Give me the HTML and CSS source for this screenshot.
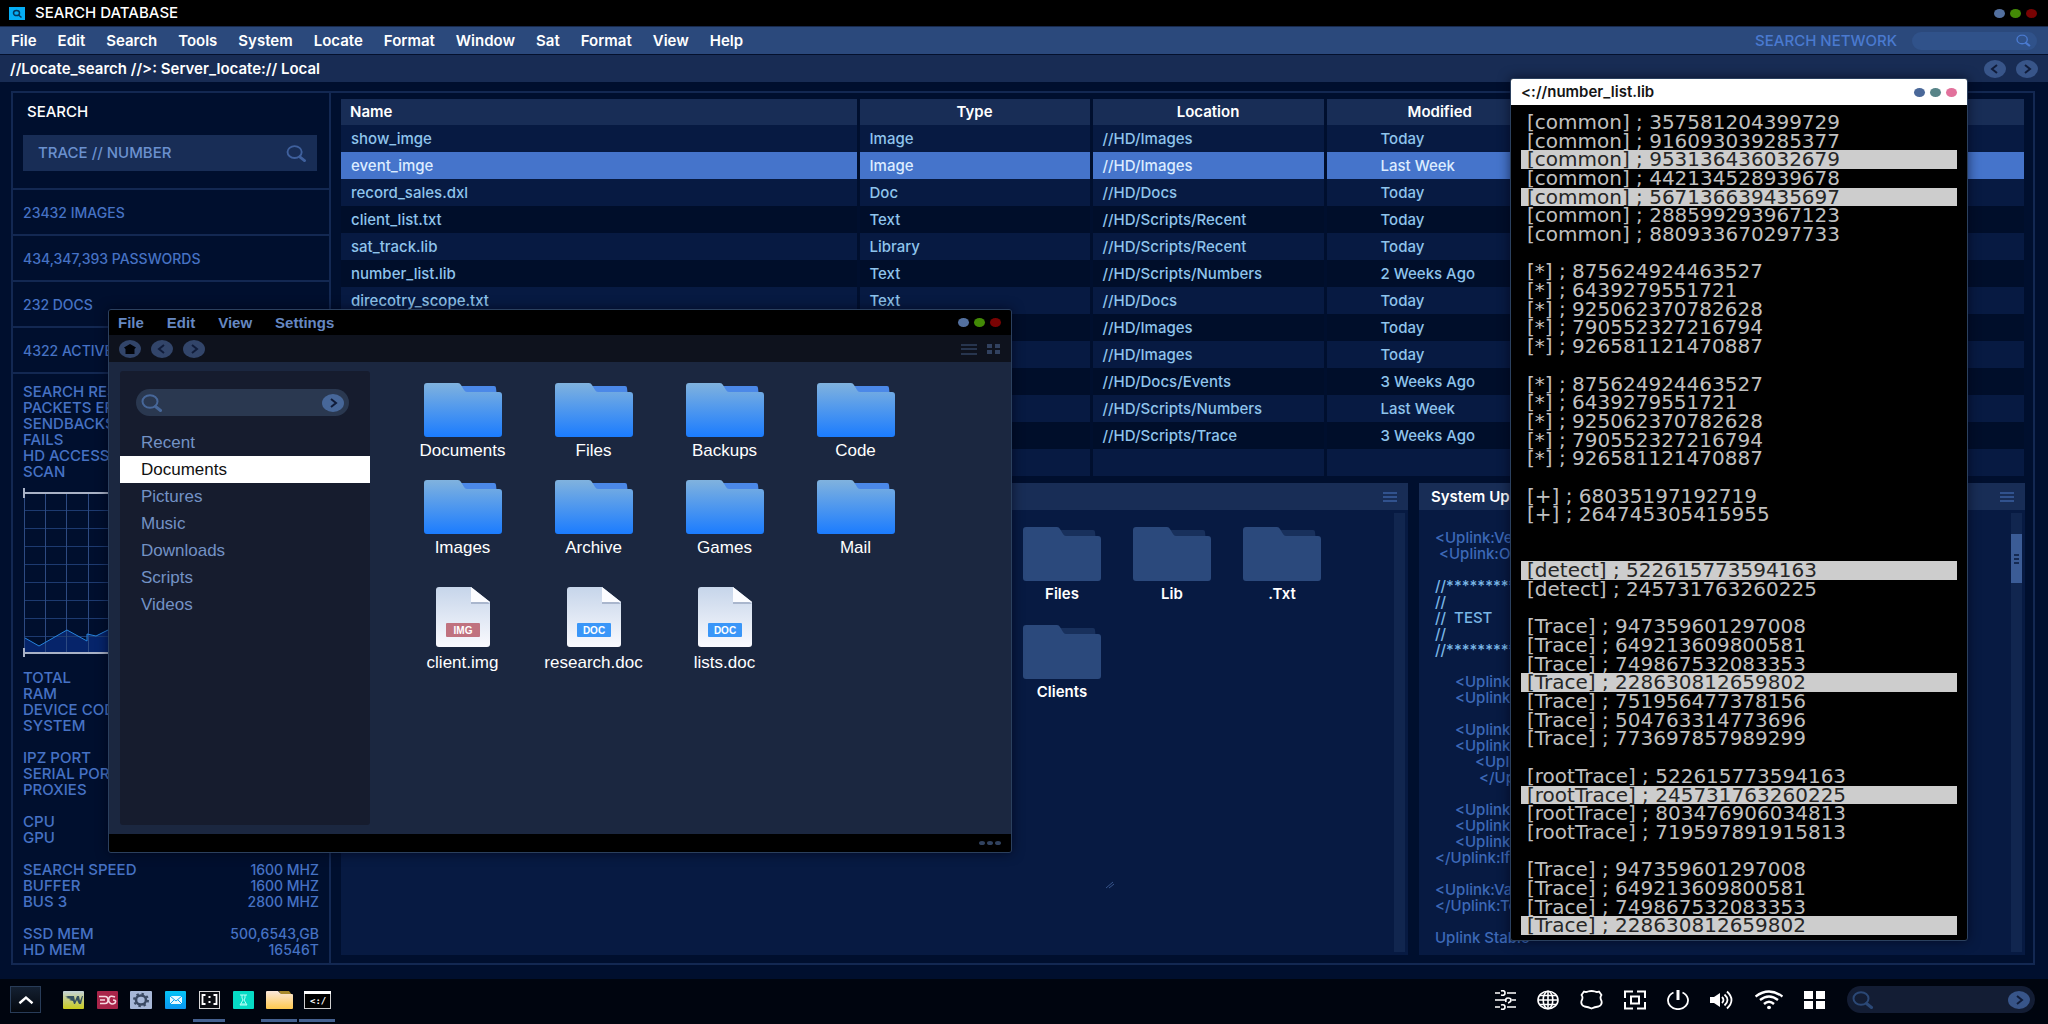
FILE: index.html
```html
<!DOCTYPE html>
<html lang="en">
<head>
<meta charset="utf-8">
<meta name="viewport" content="width=device-width, initial-scale=1">
<title>Search Database</title>
<link rel="stylesheet" href="styles.css">
</head>
<body>
<svg class="defs" aria-hidden="true">
  <defs>
    <linearGradient id="g-folder" x1="0" y1="0" x2="0" y2="1"><stop offset="0" stop-color="#80b2de"/><stop offset="1" stop-color="#1b7cff"/></linearGradient>
    <linearGradient id="g-file" x1="0" y1="0" x2="0" y2="1"><stop offset="0" stop-color="#c6d5ea"/><stop offset="1" stop-color="#fafafe"/></linearGradient>
    <linearGradient id="g-yellow" x1="0" y1="0" x2="0" y2="1"><stop offset="0" stop-color="#c4d3da"/><stop offset="1" stop-color="#c9cb1c"/></linearGradient>
    <linearGradient id="g-sand" x1="0" y1="0" x2="0" y2="1"><stop offset="0" stop-color="#fbe8dc"/><stop offset="1" stop-color="#ffc94d"/></linearGradient>
    <linearGradient id="g-mail" x1="0" y1="0" x2="0" y2="1"><stop offset="0" stop-color="#05c4f5"/><stop offset="1" stop-color="#0a96f0"/></linearGradient>
    <symbol id="folder" viewBox="0 0 78 54">
      <path class="tab" d="M36 3h34q2 0 2 2l1 9H36z"/>
      <path class="front" d="M3 0h31q2 0 3 2l3 5q1 2 3 2h32q3 0 3 3v39q0 3-3 3H3q-3 0-3-3V3q0-3 3-3z"/>
    </symbol>
    <symbol id="file" viewBox="0 0 54 60">
      <path fill="url(#g-file)" d="M3 0h32l19 15v42q0 3-3 3H3q-3 0-3-3V3q0-3 3-3z"/>
      <path fill="#a9b6cd" d="M35 2v15h19z"/>
      <path fill="#fbfcff" d="M35 0v15h19z"/>
    </symbol>
    <symbol id="lens" viewBox="0 0 22 18"><ellipse cx="9" cy="7.500" rx="7.500" ry="6.300" fill="none" stroke="currentColor" stroke-width="2"/><path d="M14.500 12.500l5 4" stroke="currentColor" stroke-width="3" stroke-linecap="round"/></symbol>
    <symbol id="next" viewBox="0 0 22 18"><path d="M9 5l5 4-5 4" fill="none" stroke="currentColor" stroke-width="2"/></symbol>
    <symbol id="prev" viewBox="0 0 22 18"><path d="M13 5L8 9l5 4" fill="none" stroke="currentColor" stroke-width="2"/></symbol>
    <symbol id="lines" viewBox="0 0 14 10"><path d="M0 1h14M0 5h14M0 9h14" stroke="currentColor" stroke-width="2"/></symbol>
  </defs>
</svg>

<header>
  <div class="titlebar">
    <svg class="app-icon" viewBox="0 0 16 13" aria-hidden="true"><rect width="16" height="13" fill="#05aef5"/><ellipse cx="7.500" cy="6" rx="3" ry="2.600" fill="none" stroke="#03365c" stroke-width="1.500"/><path d="M9.500 8l3 2.500" stroke="#03365c" stroke-width="1.500"/></svg>
    <h1>SEARCH DATABASE</h1>
    <div class="dots"><button class="dot blue" aria-label="Minimize"></button><button class="dot green" aria-label="Maximize"></button><button class="dot red" aria-label="Close"></button></div>
  </div>
  <div class="menubar">
    <nav class="menu" aria-label="Main menu">
      <button>File</button><button>Edit</button><button>Search</button><button>Tools</button><button>System</button><button>Locate</button><button>Format</button><button>Window</button><button>Sat</button><button>Format</button><button>View</button><button>Help</button>
    </nav>
    <label class="network-label" for="network">SEARCH NETWORK</label>
    <div class="network"><input id="network" type="text"><svg viewBox="0 0 22 18" aria-hidden="true"><use href="#lens"/></svg></div>
  </div>
  <div class="address">
    <span class="path">//Locate_search //&gt;: Server_locate:// Local</span>
    <button class="round" aria-label="Back"><svg><use href="#prev"/></svg></button>
    <button class="round" aria-label="Forward"><svg><use href="#next"/></svg></button>
  </div>
</header>

<main class="frame">
  <aside class="side">
    <div class="side-search">
      <label for="trace">SEARCH</label>
      <div class="field"><input id="trace" type="text" value="TRACE // NUMBER"><svg viewBox="0 0 22 18" aria-hidden="true"><use href="#lens"/></svg></div>
    </div>
    <p class="count">23432 IMAGES</p>
    <p class="count">434,347,393 PASSWORDS</p>
    <p class="count">232 DOCS</p>
    <p class="count">4322 ACTIVE</p>
    <dl class="stats stats-top">
      <dt>SEARCH RESULTS</dt><dt>PACKETS ERR</dt><dt>SENDBACKS</dt><dt>FAILS</dt><dt>HD ACCESS</dt><dt>SCAN</dt>
    </dl>
    <svg class="graph" viewBox="0 0 296 169" aria-hidden="true">
      <path fill="#06246a" d="M2 150l14 8 28-16 20 11v-7l9 2 12-6 30 8 40-10 50 6 90-4v23H2z"/>
      <path stroke="#1d3a70" stroke-width="1" d="M1 22.500h294M1 40.500h294M1 58.500h294M1 76.500h294M1 94.500h294M1 112.500h294M1 130.500h294M1 148.500h294"/>
      <path stroke="#2d4a82" stroke-width="1" d="M1.500 5v160M22.500 5v160M43.500 5v160M65.500 5v160M86.500 5v160M107.500 5v160M129.500 5v160"/>
      <path fill="none" stroke="#2784dd" stroke-width="1" d="M2 150l14 8 28-16 20 11v-7l9 2 12-6 30 8 40-10 50 6 90-4"/>
      <path stroke="#a9b2c6" stroke-width="2" d="M1 5h294M1 165h294M1 0v10M1 160v9"/>
    </svg>
    <dl class="stats">
      <dt>TOTAL</dt><dt>RAM</dt><dt>DEVICE CODE</dt><dt>SYSTEM</dt>
      <dt class="gap">IPZ PORT</dt><dt>SERIAL PORTS</dt><dt>PROXIES</dt>
      <dt class="gap">CPU</dt><dt>GPU</dt>
      <dt class="gap">SEARCH SPEED</dt><dd>1600 MHZ</dd><dt>BUFFER</dt><dd>1600 MHZ</dd><dt>BUS 3</dt><dd>2800 MHZ</dd>
      <dt class="gap">SSD MEM</dt><dd>500,6543,GB</dd><dt>HD MEM</dt><dd>16546T</dd>
    </dl>
  </aside>

  <div class="content">
    <table class="files">
      <colgroup><col class="c-name"><col class="c-type"><col class="c-loc"><col class="c-mod"><col></colgroup>
      <thead><tr><th>Name</th><th>Type</th><th>Location</th><th>Modified</th><th></th></tr></thead>
      <tbody>
        <tr><td>show_imge</td><td>Image</td><td>//HD/Images</td><td>Today</td><td></td></tr>
        <tr class="selected"><td>event_imge</td><td>Image</td><td>//HD/Images</td><td>Last Week</td><td></td></tr>
        <tr><td>record_sales.dxl</td><td>Doc</td><td>//HD/Docs</td><td>Today</td><td></td></tr>
        <tr><td>client_list.txt</td><td>Text</td><td>//HD/Scripts/Recent</td><td>Today</td><td></td></tr>
        <tr><td>sat_track.lib</td><td>Library</td><td>//HD/Scripts/Recent</td><td>Today</td><td></td></tr>
        <tr><td>number_list.lib</td><td>Text</td><td>//HD/Scripts/Numbers</td><td>2 Weeks Ago</td><td></td></tr>
        <tr><td>direcotry_scope.txt</td><td>Text</td><td>//HD/Docs</td><td>Today</td><td></td></tr>
        <tr><td></td><td></td><td>//HD/Images</td><td>Today</td><td></td></tr>
        <tr><td></td><td></td><td>//HD/Images</td><td>Today</td><td></td></tr>
        <tr><td></td><td></td><td>//HD/Docs/Events</td><td>3 Weeks Ago</td><td></td></tr>
        <tr><td></td><td></td><td>//HD/Scripts/Numbers</td><td>Last Week</td><td></td></tr>
        <tr><td></td><td></td><td>//HD/Scripts/Trace</td><td>3 Weeks Ago</td><td></td></tr>
        <tr><td></td><td></td><td></td><td></td><td></td></tr>
      </tbody>
    </table>
    <div class="panels">
      <section class="panel">
        <div class="panel-head"><button class="lines" aria-label="Panel menu"><svg><use href="#lines"/></svg></button></div>
        <div class="panel-body">
          <div class="archive">
            <a href="#"><svg><use href="#folder"/></svg>Files</a>
            <a href="#"><svg><use href="#folder"/></svg>Lib</a>
            <a href="#"><svg><use href="#folder"/></svg>.Txt</a>
            <a href="#"><svg><use href="#folder"/></svg>Clients</a>
          </div>
          <svg class="grip" viewBox="0 0 10 8" aria-hidden="true"><path d="M1 7l7-6M4 7l5-4" stroke="#37558c" stroke-width="1"/></svg>
          <div class="scroll"></div>
        </div>
      </section>
      <section class="panel">
        <div class="panel-head"><h2>System Uplink</h2><button class="lines" aria-label="Panel menu"><svg><use href="#lines"/></svg></button></div>
        <div class="panel-body">
<pre class="code">&lt;Uplink:Version
 &lt;Uplink:Open

<span class="note">//*******************
//
//  TEST
//
//*******************</span>

     &lt;Uplink
     &lt;Uplink

     &lt;Uplink
     &lt;Uplink
          &lt;Uplink
           &lt;/Uplink

     &lt;Uplink
     &lt;Uplink
     &lt;Uplink
&lt;/Uplink:If

&lt;Uplink:Val
&lt;/Uplink:Test

Uplink Stable</pre>
          <div class="scroll"><div class="thumb"><i></i><i></i><i></i></div></div>
        </div>
      </section>
    </div>
  </div>
</main>

<footer class="taskbar">
  <button class="start" aria-label="Start"><svg viewBox="0 0 31 26"><path d="M9 17l7-6 7 6" fill="none" stroke="#fff" stroke-width="2.500"/></svg></button>
  <div class="apps">
    <button aria-label="Wings"><svg width="21" height="18" viewBox="0 0 21 18"><rect width="21" height="18" rx="1" fill="url(#g-yellow)"/><path d="M2 5h9l1 5 2-5h2l1 5 2-5h1l-2 8h-2l-2-4-2 4h-1l-1-3-4-1 2-1-5-1 2-1z" fill="#35505f"/></svg></button>
    <button aria-label="Links"><svg width="21" height="18" viewBox="0 0 21 18"><rect width="21" height="18" rx="1" fill="#a82449"/><path d="M2 5.500h6q3 0 3 3.500t-3 3.500H3M3 9h5M18 6q-5-2-6 1t1 5 5 0q2-3-2-3" fill="none" stroke="#f5d8e0" stroke-width="1.600"/></svg></button>
    <button aria-label="Settings"><svg width="22" height="18" viewBox="0 0 22 18"><rect width="22" height="18" rx="1" fill="#a7b8d8"/><ellipse cx="11" cy="9" rx="5" ry="4.500" fill="none" stroke="#3b4a63" stroke-width="2.600"/><ellipse cx="11" cy="9" rx="7" ry="6.200" fill="none" stroke="#3b4a63" stroke-width="2" stroke-dasharray="2.400 2.800"/></svg></button>
    <button aria-label="Mail"><svg width="21" height="18" viewBox="0 0 21 18"><rect width="21" height="18" rx="1" fill="url(#g-mail)"/><rect x="5" y="5" width="12" height="8" fill="#e8faff"/><path d="M5 5l6 5 6-5M5 13l4-4M17 13l-4-4" fill="none" stroke="#0a9fee" stroke-width="1"/></svg></button>
    <button class="open" aria-label="Brackets"><svg width="21" height="18" viewBox="0 0 21 18"><rect x=".5" y=".5" width="20" height="17" fill="#0b0d12" stroke="#d8d8d8"/><path d="M6.500 4h-3v9h3M14.500 4h3v9h-3" fill="none" stroke="#fff" stroke-width="1.800"/><path d="M9.500 5h2v2h-2zM9.500 10h2v2h-2z" fill="#fff"/></svg></button>
    <button aria-label="Lab"><svg width="21" height="18" viewBox="0 0 21 18"><rect width="21" height="18" rx="1" fill="#06dcc6"/><path d="M7 4h7M9 4v3l1 2-3 5h7l-3-5 1-2V4M8 13h5" fill="none" stroke="#b8fff6" stroke-width="1"/></svg></button>
    <button class="open wide" aria-label="Files"><svg width="27" height="18" viewBox="0 0 27 18"><path d="M13 0h10l3 4H15z" fill="#a98a2c"/><path d="M1 0h11l3 3h11q1 0 1 1v13q0 1-1 1H1q-1 0-1-1V1q0-1 1-1z" fill="url(#g-sand)"/></svg></button>
    <button class="open wide" aria-label="Terminal"><svg width="27" height="18" viewBox="0 0 27 18"><rect x=".5" y=".5" width="26" height="17" fill="#000" stroke="#cfcfcf"/><path d="M0 0h27v3H0z" fill="#fff"/><text x="6" y="13" class="glyph">&lt;:/</text></svg></button>
  </div>
  <div class="tray">
    <button aria-label="Controls"><svg width="21" height="20" viewBox="0 0 21 20"><path d="M0 3h5M12 3h9M0 10h10M17 10h4M0 17h5M12 17h9M6 1q4-1 4 2t-4 2M11 12q-1-4 2-4t3 2-3 3M6 15q4-1 4 2t-4 2" fill="none" stroke="#fff" stroke-width="1.700"/></svg></button>
    <button aria-label="Language"><svg width="22" height="20" viewBox="0 0 22 20"><g fill="none" stroke="#fff" stroke-width="1.600"><ellipse cx="11" cy="10" rx="10" ry="8.800"/><ellipse cx="11" cy="10" rx="4.800" ry="8.800"/><path d="M1 10h20M2.500 5.500h17M2.500 14.500h17M11 1v18"/></g></svg></button>
    <button aria-label="Security"><svg width="23" height="20" viewBox="0 0 23 20"><path d="M4 1.500q2 1 4 0 3.500-1 7 0 2 1 4 0l2.500 3.500q-2 2.500 0 6 1 4-3 5.500-4 .5-7 2-3-1.500-7-2-4-1.500-3-5.500 2-3.500 0-6z" fill="none" stroke="#fff" stroke-width="1.800" stroke-linejoin="round"/></svg></button>
    <button aria-label="Capture"><svg width="22" height="20" viewBox="0 0 22 20"><path d="M1 8V1.500h8M13 1.500h8V8M21 12v6.500h-8M9 18.500H1V12M7 6.500h8v7H7z" fill="none" stroke="#fff" stroke-width="2"/></svg></button>
    <button aria-label="Power"><svg width="22" height="20" viewBox="0 0 22 20"><path d="M6.500 2.500a10 8.800 0 1 0 9 0" fill="none" stroke="#fff" stroke-width="1.800"/><path d="M11 0v10" stroke="#fff" stroke-width="3"/></svg></button>
    <button aria-label="Volume"><svg width="24" height="20" viewBox="0 0 24 20"><path d="M0 7h4l6-4v14l-6-4H0z" fill="#fff"/><path d="M12 7q3 3 0 6M14.500 4.500q6 5.500 0 11M17 1.500q9 8.500 0 17" fill="none" stroke="#fff" stroke-width="1.800"/></svg></button>
    <button aria-label="Wi-Fi"><svg width="28" height="20" viewBox="0 0 28 20"><path d="M.5 6.500Q14-3.500 27.500 6.500M5 10q9-7 18 0M9 14q5-4.500 10 0" fill="none" stroke="#fff" stroke-width="2.400"/><ellipse cx="14" cy="17.500" rx="2" ry="1.700" fill="#fff"/></svg></button>
    <button aria-label="All apps"><svg width="22" height="20" viewBox="0 0 22 20"><path d="M0 1h9v8H0zM12 1h9v8h-9zM0 11h9v8H0zM12 11h9v8h-9z" fill="#fff"/></svg></button>
    <div class="pill task-search"><svg class="lens" viewBox="0 0 22 18"><use href="#lens"/></svg><input type="text" aria-label="Search the system"><button class="round" aria-label="Go"><svg><use href="#next"/></svg></button></div>
  </div>
</footer>

<section class="window explorer" aria-label="Documents">
  <div class="win-title">
    <nav class="win-menu" aria-label="Window menu"><button>File</button><button>Edit</button><button>View</button><button>Settings</button></nav>
    <div class="dots"><button class="dot blue" aria-label="Minimize"></button><button class="dot green" aria-label="Maximize"></button><button class="dot red" aria-label="Close"></button></div>
  </div>
  <div class="toolbar">
    <button class="round" aria-label="Home"><svg viewBox="0 0 22 18"><path d="M11 4l6 3.500-1.500 1.500V14h-9V9L5 7.500z" fill="#020409"/></svg></button>
    <button class="round" aria-label="Back"><svg><use href="#prev"/></svg></button>
    <button class="round" aria-label="Forward"><svg><use href="#next"/></svg></button>
    <div class="views">
      <button aria-label="List view"><svg width="16" height="12" viewBox="0 0 16 12"><path d="M0 2h16M0 6h16M0 11h16" stroke="#31415f" stroke-width="1.500"/></svg></button>
      <button aria-label="Grid view"><svg width="13" height="12" viewBox="0 0 13 12"><path d="M0 1h5v4H0zM8 1h5v4H8zM0 7h5v4H0zM8 7h5v4H8z" fill="#31415f"/></svg></button>
    </div>
  </div>
  <div class="win-body">
    <aside class="places">
      <div class="pill"><svg class="lens" viewBox="0 0 22 18"><use href="#lens"/></svg><input type="text" aria-label="Search files"><button class="round" aria-label="Go"><svg><use href="#next"/></svg></button></div>
      <nav><a href="#">Recent</a><a href="#" class="here" aria-current="page">Documents</a><a href="#">Pictures</a><a href="#">Music</a><a href="#">Downloads</a><a href="#">Scripts</a><a href="#">Videos</a></nav>
    </aside>
    <div class="icons">
      <a href="#"><svg><use href="#folder"/></svg>Documents</a>
      <a href="#"><svg><use href="#folder"/></svg>Files</a>
      <a href="#"><svg><use href="#folder"/></svg>Backups</a>
      <a href="#"><svg><use href="#folder"/></svg>Code</a>
      <a href="#"><svg><use href="#folder"/></svg>Images</a>
      <a href="#"><svg><use href="#folder"/></svg>Archive</a>
      <a href="#"><svg><use href="#folder"/></svg>Games</a>
      <a href="#"><svg><use href="#folder"/></svg>Mail</a>
      <a href="#" class="doc"><svg viewBox="0 0 54 60"><use href="#file"/><rect x="10" y="36" width="34" height="14" rx="1" fill="#c0727f"/><text x="27" y="47" class="ext">IMG</text></svg>client.img</a>
      <a href="#" class="doc"><svg viewBox="0 0 54 60"><use href="#file"/><rect x="10" y="36" width="34" height="14" rx="1" fill="#3a96f8"/><text x="27" y="47" class="ext">DOC</text></svg>research.doc</a>
      <a href="#" class="doc"><svg viewBox="0 0 54 60"><use href="#file"/><rect x="10" y="36" width="34" height="14" rx="1" fill="#3a96f8"/><text x="27" y="47" class="ext">DOC</text></svg>lists.doc</a>
    </div>
  </div>
  <div class="win-foot"><i></i><i></i><i></i></div>
</section>

<section class="window numbers" aria-label="number_list.lib">
  <div class="num-title"><h2>&lt;://number_list.lib</h2>
    <div class="dots"><button class="dot navy" aria-label="Minimize"></button><button class="dot teal" aria-label="Maximize"></button><button class="dot pink" aria-label="Close"></button></div>
  </div>
  <div class="num-list">
    <div>[common] ; 357581204399729</div>
    <div>[common] ; 916093039285377</div>
    <div class="mark">[common] ; 953136436032679</div>
    <div>[common] ; 442134528939678</div>
    <div class="mark">[common] ; 567136639435697</div>
    <div>[common] ; 288599293967123</div>
    <div>[common] ; 880933670297733</div>
    <div></div>
    <div>[*] ; 875624924463527</div>
    <div>[*] ; 6439279551721</div>
    <div>[*] ; 925062370782628</div>
    <div>[*] ; 790552327216794</div>
    <div>[*] ; 926581121470887</div>
    <div></div>
    <div>[*] ; 875624924463527</div>
    <div>[*] ; 6439279551721</div>
    <div>[*] ; 925062370782628</div>
    <div>[*] ; 790552327216794</div>
    <div>[*] ; 926581121470887</div>
    <div></div>
    <div>[+] ; 68035197192719</div>
    <div>[+] ; 264745305415955</div>
    <div></div>
    <div></div>
    <div class="mark">[detect] ; 522615773594163</div>
    <div>[detect] ; 245731763260225</div>
    <div></div>
    <div>[Trace] ; 947359601297008</div>
    <div>[Trace] ; 649213609800581</div>
    <div>[Trace] ; 749867532083353</div>
    <div class="mark">[Trace] ; 228630812659802</div>
    <div>[Trace] ; 751956477378156</div>
    <div>[Trace] ; 504763314773696</div>
    <div>[Trace] ; 773697857989299</div>
    <div></div>
    <div>[rootTrace] ; 522615773594163</div>
    <div class="mark">[rootTrace] ; 245731763260225</div>
    <div>[rootTrace] ; 803476906034813</div>
    <div>[rootTrace] ; 719597891915813</div>
    <div></div>
    <div>[Trace] ; 947359601297008</div>
    <div>[Trace] ; 649213609800581</div>
    <div>[Trace] ; 749867532083353</div>
    <div class="mark">[Trace] ; 228630812659802</div>
  </div>
</section>
</body>
</html>
```
FILE: styles.css
```css
:root {
  --bg: #000f2e;
  --line: #132852;
  --head: #182d56;
  --panel: #071a42;
  --blue: #4672c4;
  --sky: #8fc4ec;
  --folder-front: url(#g-folder);
  --folder-tab: #4b88e8;
}

* { box-sizing: border-box; }

body {
  margin: 0;
  min-height: 100vh;
  display: flex;
  flex-direction: column;
  position: relative;
  overflow: hidden;
  background: var(--bg);
  color: #fff;
  font: 500 15px/16px Inter, "Liberation Sans", sans-serif;
}

h1, h2, p, dl, dd, pre { margin: 0; font: inherit; }
a { color: inherit; text-decoration: none; }
button, input { margin: 0; padding: 0; border: 0; background: none; color: inherit; font: inherit; }
button svg { display: block; }
.defs { position: absolute; width: 0; height: 0; }

/* Shared parts */
.dots { display: flex; gap: 5px; margin-left: auto; }
.dot { width: 11px; height: 9px; border-radius: 50%; }
.blue { background: #53709f; }
.green { background: #438a06; }
.red { background: #790303; }
.navy { background: #4a6899; }
.teal { background: #588488; }
.pink { background: #e2719c; }
.round { width: 22px; height: 18px; flex: none; border-radius: 50%; background: #385589; color: #101c3a; }
.round svg { width: 22px; height: 18px; }
.pill { display: flex; align-items: center; gap: 4px; height: 27px; padding: 0 5px; border-radius: 14px; background: #2a3850; color: #476799; }
.pill input { flex: 1; min-width: 0; }
.lens { width: 22px; height: 18px; flex: none; }

/* Top bars */
.titlebar { display: flex; align-items: center; height: 27px; padding: 0 11px 0 9px; background: #000; border-bottom: 1px solid #17294c; }
.titlebar h1 { margin-left: 10px; font-weight: 500; }
.menubar { display: flex; align-items: center; height: 28px; padding: 0 11px; background: #2b497c; border-bottom: 1px solid #04102c; }
.app-icon { width: 16px; height: 13px; }
.menu { display: flex; gap: 21px; font-weight: 600; }
.network-label { margin-left: auto; color: #4a7ad0; }
.network { display: flex; align-items: center; width: 125px; height: 18px; margin-left: 15px; padding-right: 6px; border-radius: 9px; background: #30528a; color: #4a7ad0; }
.network input { flex: 1; min-width: 0; }
.network svg { width: 15px; height: 13px; }
.address { display: flex; align-items: center; gap: 10px; height: 27px; padding: 0 10px; background: #182c54; font-weight: 600; }
.path { margin-right: auto; }

/* Main frame */
.frame { flex: 1; display: flex; margin: 9px 13px 14px 11px; border: 2px solid var(--line); }
.side { width: 318px; flex: none; border-right: 2px solid var(--line); color: var(--blue); }
.side-search { height: 97px; padding: 11px 12px 0 10px; border-bottom: 2px solid var(--line); }
.side-search label { display: block; margin-bottom: 15px; padding-left: 4px; color: #fff; }
.field { display: flex; align-items: center; height: 36px; padding: 0 10px 0 15px; background: #182d56; color: #3f609d; }
.field input { flex: 1; min-width: 0; color: #6b91cf; }
.field svg { width: 21px; height: 17px; }
.count { height: 46px; padding: 15px 10px 0; border-bottom: 2px solid var(--line); font-size: 14px; }
.stats { display: grid; grid-template-columns: 1fr auto; padding: 0 10px; }
.stats dt { grid-column: 1; }
.stats .gap { margin-top: 16px; }
.stats dd { grid-column: 2; align-self: end; text-align: right; font-size: 14px; }
.stats-top { padding-top: 10px; }
.graph { display: block; width: 296px; height: 169px; margin: 8px 10px 13px; }

.content { flex: 1; min-width: 0; display: flex; flex-direction: column; gap: 7px; padding: 6px 8px 8px 10px; }

/* File table */
.files { width: 100%; table-layout: fixed; border-collapse: collapse; color: var(--sky); }
.c-name { width: 517px; }
.c-type { width: 233px; }
.c-loc { width: 234px; }
.c-mod { width: 228px; }
.files th { height: 26px; padding: 0; background: var(--head); color: #fff; font-weight: 600; }
.files th:first-child { padding-left: 9px; text-align: left; }
.files td { height: 27px; padding: 0 10px; white-space: nowrap; }
.files td:nth-child(4) { padding-left: 54px; }
.files th:nth-child(-n+3), .files td:nth-child(-n+3) { border-right: 3px solid var(--bg); }
.files tbody tr:nth-child(odd) { background: var(--panel); }
.files tbody tr:nth-child(even) { background: #000e2a; }
.files tbody tr.selected { background: #4574cb; color: #dcecff; }

/* Lower panels */
.panels { flex: 1; display: grid; grid-template-columns: 1067fr 606fr; gap: 11px; }
.panel { display: flex; flex-direction: column; background: var(--panel); }
.panel-head { display: flex; align-items: center; height: 27px; padding: 0 11px 0 12px; background: var(--head); font-weight: 600; }
.lines { margin-left: auto; color: #31528e; }
.lines svg { width: 14px; height: 10px; }
.panel-body { flex: 1; display: flex; position: relative; padding: 3px 3px 3px 16px; }
.scroll { width: 11px; flex: none; padding-top: 21px; background: #11264f; }
.thumb { display: flex; flex-direction: column; justify-content: center; gap: 2px; height: 49px; padding: 0 3px; background: #3b5c96; }
.thumb i { height: 2px; background: #152a52; }
.archive { --folder-front: #2b497c; --folder-tab: #18305c; display: grid; grid-template-columns: repeat(3, 78px); grid-auto-rows: 74px; gap: 24px 32px; margin: 14px 73px auto auto; }
.archive a { display: flex; flex-direction: column; align-items: center; gap: 5px; font-weight: 600; }
.archive svg { width: 78px; height: 54px; flex: none; }
.grip { position: absolute; right: 293px; bottom: 66px; width: 10px; height: 8px; }
.code { flex: 1; padding-top: 17px; color: #3d69b8; }
.note { color: #79b6e6; }

/* Folder and file icons */
.tab { fill: var(--folder-tab); }
.front { fill: var(--folder-front); }
.ext { fill: #fff; font: 700 10px "Liberation Sans", sans-serif; text-anchor: middle; }

/* Windows */
.window { position: absolute; display: flex; flex-direction: column; border: 1px solid #2b405e; border-radius: 3px; overflow: hidden; box-shadow: 0 0 12px rgba(0, 4, 16, .6); }
.explorer { left: 108px; top: 309px; width: 904px; height: 544px; background: #1b2740; font: 17px/18px "Liberation Sans", Arial, sans-serif; }
.win-title { display: flex; align-items: center; height: 25px; padding: 0 10px 0 9px; background: #000; color: #6688c2; font-size: 15px; font-weight: 700; }
.win-menu { display: flex; gap: 23px; }
.toolbar { display: flex; align-items: center; gap: 10px; height: 27px; padding: 0 11px 0 10px; background: #0e121d; }
.toolbar .round { background: #32456a; }
.views { display: flex; gap: 10px; margin-left: auto; }
.win-body { flex: 1; display: flex; padding: 9px 11px; }
.places { width: 250px; flex: none; border-radius: 3px; background: #161c2e; color: #7392c5; }
.places .pill { margin: 18px 21px 13px 16px; }
.places .round { background: #476799; }
.places nav { display: grid; grid-auto-rows: 27px; }
.places a { display: flex; align-items: center; padding-left: 21px; }
.places .here { background: #fff; color: #111; }
.icons { display: grid; grid-template-columns: repeat(4, 131px); grid-template-rows: 97px 107px 90px; padding: 12px 0 0 27px; }
.icons a { display: flex; flex-direction: column; align-items: center; gap: 5px; }
.icons svg { width: 78px; height: 54px; flex: none; }
.icons .doc svg { width: 54px; height: 60px; }
.icons .doc { gap: 7px; }
.win-foot { display: flex; align-items: center; justify-content: flex-end; gap: 2px; height: 18px; padding-right: 10px; background: #000; }
.win-foot i { width: 6px; height: 4px; border-radius: 50%; background: #31425f; }

.numbers { left: 1510px; top: 78px; width: 458px; height: 863px; background: #000; }
.num-title { display: flex; align-items: center; height: 26px; flex: none; padding: 0 10px; background: #fff; color: #151515; font-weight: 600; }
.num-list { flex: 1; min-height: 0; display: grid; grid-auto-rows: 1fr; padding: 8px 10px 5px; color: #c0c0c0; font: 20px/18px "DejaVu Sans", sans-serif; }
.num-list div { min-height: 0; padding-left: 6px; white-space: pre; }
.num-list .mark { background: #cdcdcd; color: #262626; }

/* Taskbar */
.taskbar { display: flex; align-items: center; height: 45px; padding: 0 13px 4px 10px; background: #00050f; }
.start { width: 31px; height: 27px; border: 1px solid #283c58; background: linear-gradient(#142031, #04080f); }
.start svg { width: 29px; height: 25px; }
.apps { display: flex; gap: 2px; align-self: stretch; margin: 0 auto 0 16px; padding-top: 10px; }
.apps button { display: flex; justify-content: center; align-items: center; width: 32px; height: 33px; padding-bottom: 8px; border-bottom: 3px solid transparent; }
.apps .wide { width: 36px; }
.apps .open { border-color: #44608f; }
.glyph { fill: #fff; font: 700 9px "DejaVu Sans Mono", monospace; }
.tray { display: flex; align-items: center; gap: 21px; }
.task-search { width: 188px; background: #131d34; color: #2b4876; }
.task-search .round { background: #385589; }
```
